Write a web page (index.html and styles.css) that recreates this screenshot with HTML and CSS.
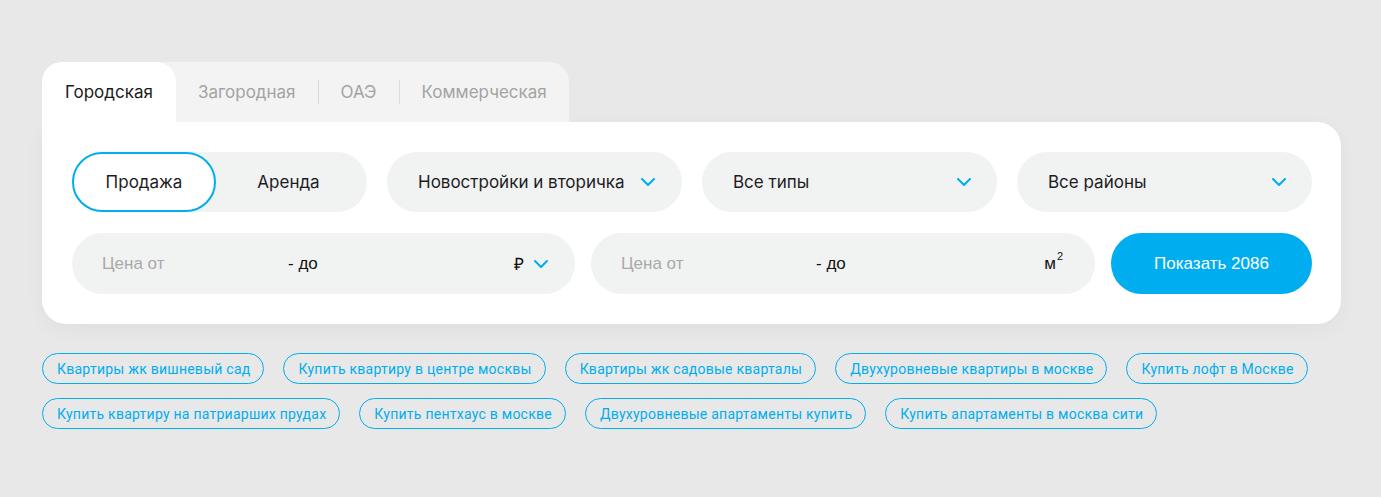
FILE: index.html
```html
<!DOCTYPE html>
<html lang="ru">
<head>
<meta charset="utf-8">
<link rel="stylesheet" href="styles.css">
</head>
<body>
<div class="page">
  <div class="search">
    <div class="tabs">
      <div class="tab active">Городская</div>
      <div class="tab">Загородная</div>
      <div class="sep"></div>
      <div class="tab">ОАЭ</div>
      <div class="sep"></div>
      <div class="tab">Коммерческая</div>
    </div>
    <div class="card">
      <div class="row row1">
        <div class="toggle">
          <div class="toggle-item on">Продажа</div>
          <div class="toggle-item">Аренда</div>
        </div>
        <div class="select">
          <span>Новостройки и вторичка</span>
          <svg class="chev" width="14" height="8" viewBox="0 0 14 8"><path d="M1 1l6 6 6-6" fill="none" stroke="#00aeef" stroke-width="2" stroke-linecap="round" stroke-linejoin="round"/></svg>
        </div>
        <div class="select spread">
          <span>Все типы</span>
          <svg class="chev" width="14" height="8" viewBox="0 0 14 8"><path d="M1 1l6 6 6-6" fill="none" stroke="#00aeef" stroke-width="2" stroke-linecap="round" stroke-linejoin="round"/></svg>
        </div>
        <div class="select spread">
          <span>Все районы</span>
          <svg class="chev" width="14" height="8" viewBox="0 0 14 8"><path d="M1 1l6 6 6-6" fill="none" stroke="#00aeef" stroke-width="2" stroke-linecap="round" stroke-linejoin="round"/></svg>
        </div>
      </div>
      <div class="row row2">
        <div class="range">
          <span class="from">Цена от</span>
          <span class="to">- до</span>
          <span class="unit">₽
            <svg class="chev" width="14" height="8" viewBox="0 0 14 8"><path d="M1 1l6 6 6-6" fill="none" stroke="#00aeef" stroke-width="2" stroke-linecap="round" stroke-linejoin="round"/></svg>
          </span>
        </div>
        <div class="range area">
          <span class="from">Цена от</span>
          <span class="to">- до</span>
          <span class="unit">м<sup>2</sup></span>
        </div>
        <button class="show">Показать 2086</button>
      </div>
    </div>
    <div class="chips">
      <a class="chip">Квартиры жк вишневый сад</a>
      <a class="chip">Купить квартиру в центре москвы</a>
      <a class="chip">Квартиры жк садовые кварталы</a>
      <a class="chip">Двухуровневые квартиры в москве</a>
      <a class="chip">Купить лофт в Москве</a>
      <a class="chip">Купить квартиру на патриарших прудах</a>
      <a class="chip">Купить пентхаус в москве</a>
      <a class="chip">Двухуровневые апартаменты купить</a>
      <a class="chip">Купить апартаменты в москва сити</a>
    </div>
  </div>
</div>
</body>
</html>
```

FILE: styles.css
```css
* { box-sizing: border-box; }
html, body { margin: 0; padding: 0; }
body {
  background: #e8e8e8;
  font-family: Inter, "Noto Sans", sans-serif;
  color: #1d1d1f;
}
.page {
  padding: 62px 40px 0 42px;
}
.search { width: 1299px; }

.tabs {
  display: inline-flex;
  align-items: center;
  background: #f3f3f3;
  border-radius: 20px 20px 0 0;
  height: 60px;
  vertical-align: bottom;
}
.tab {
  font-size: 17px;
  color: #a3a3a3;
  padding: 0 22px;
  height: 60px;
  line-height: 60px;
}
.tab.active {
  background: #fff;
  color: #1b1b1b;
  border-radius: 20px 20px 0 0;
  padding: 0 23px;
}
.sep {
  width: 1px;
  height: 24px;
  background: #dcdcdc;
}

.card {
  background: #fff;
  border-radius: 0 24px 24px 24px;
  padding: 30px 29px 30px 30px;
  box-shadow: 0 6px 20px rgba(0,0,0,0.04);
}
.row { display: flex; }
.row1 { gap: 20px; height: 60px; }
.row2 { gap: 16px; height: 61px; margin-top: 21px; }

.toggle {
  width: 295px;
  display: flex;
  background: #f1f2f2;
  border-radius: 30px;
}
.toggle-item {
  width: 144px;
  display: flex;
  align-items: center;
  justify-content: center;
  font-size: 17px;
  color: #1d1d1f;
  border-radius: 30px;
}
.toggle-item.on {
  background: #fff;
  border: 2px solid #00aeef;
}
.toggle-item + .toggle-item { flex: 1; padding-right: 6px; }

.select {
  width: 295px;
  display: flex;
  align-items: center;
  gap: 16px;
  padding: 0 26px 0 31px;
  background: #f1f2f2;
  border-radius: 30px;
  font-size: 17px;
}
.select.spread { justify-content: space-between; }
.chev { display: block; flex: none; }

.range {
  flex: 0 0 503px;
  display: flex;
  align-items: center;
  background: #f1f2f2;
  border-radius: 31px;
  padding: 0 27px 0 30px;
  font-family: "Liberation Sans", Arial, sans-serif;
  font-size: 17px;
}
.range.area { flex-basis: 504px; padding-right: 32px; }
.from { color: #a9a9a9; width: 186px; }
.area .from { width: 195px; }
.to { color: #111; }
.unit {
  margin-left: auto;
  display: flex;
  align-items: center;
  gap: 10px;
  color: #111;
}
.area .unit { gap: 0; align-items: flex-start; }
.unit sup { font-size: 11px; line-height: 1; margin-left: 1px; margin-top: -3px; }

.show {
  flex: 0 0 201px;
  border: 0;
  background: #00aeef;
  color: #fff;
  border-radius: 31px;
  font-family: "Liberation Sans", Arial, sans-serif;
  font-size: 17px;
  cursor: pointer;
}

.chips {
  display: flex;
  flex-wrap: wrap;
  gap: 14px 19px;
  margin-top: 29px;
  width: 1290px;
}
.chip {
  display: inline-flex;
  align-items: center;
  height: 31px;
  padding: 0 13px 0 14px;
  border: 1px solid #00aeef;
  border-radius: 16px;
  color: #00aeef;
  font-family: Roboto, sans-serif;
  font-size: 14px;
  letter-spacing: 0.25px;
  text-decoration: none;
}
```
